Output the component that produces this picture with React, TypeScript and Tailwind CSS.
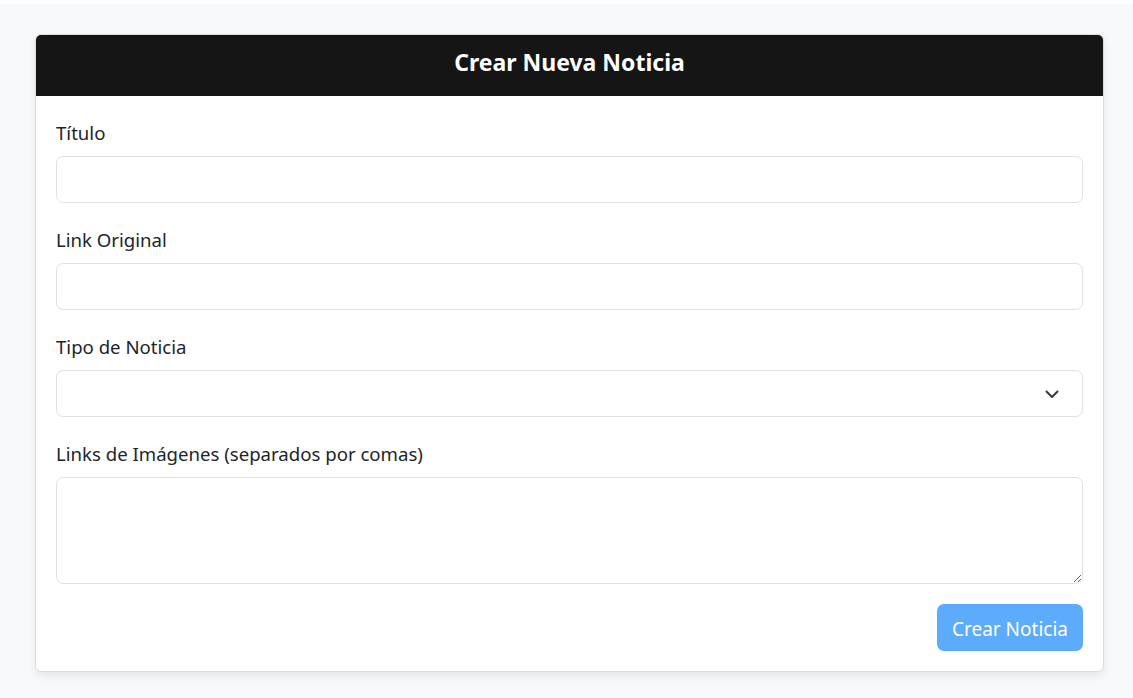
import React from "react";

export default function App() {
  const label = "block text-[18.6px] leading-[30px] pt-[2px] mb-[8px] text-[#212529]";
  const field =
    "block w-full h-[47px] rounded-[7px] border border-[#dee2e6] bg-white px-[12px] text-[18px] text-[#212529] outline-none";
  return (
    <div
      className="min-h-[698px] bg-white pt-[4px]"
      style={{ fontFamily: '"Noto Sans", "Open Sans", sans-serif' }}
    >
      <div className="min-h-[694px] bg-[#f8f9fa] pt-[30px] pl-[35px] pr-[29px] pb-[27px]">
        <div className="w-[1069px] overflow-hidden rounded-[6px] border border-[#dcdcdc] bg-white shadow-[0_4px_8px_rgba(0,0,0,0.08)]">
          <div className="flex h-[61px] items-center justify-center bg-[#151515] pb-[7px]">
            <h1 className="text-[23px] font-bold leading-none text-white">Crear Nueva Noticia</h1>
          </div>
          <form className="flex flex-col gap-[20px] p-[20px]" onSubmit={(e) => e.preventDefault()}>
            <div>
              <label className={label}>Título</label>
              <input type="text" className={field} />
            </div>
            <div>
              <label className={label}>Link Original</label>
              <input type="text" className={field} />
            </div>
            <div>
              <label className={label}>Tipo de Noticia</label>
              <div className="relative">
                <select className={field + " appearance-none"}>
                  <option value=""></option>
                </select>
                <svg
                  className="pointer-events-none absolute right-[24px] top-1/2 -translate-y-1/2"
                  width="14"
                  height="10"
                  viewBox="0 0 14 10"
                  fill="none"
                >
                  <path d="M1.5 2.5 L7 8 L12.5 2.5" stroke="#343a40" strokeWidth="2" strokeLinecap="round" strokeLinejoin="round" />
                </svg>
              </div>
            </div>
            <div>
              <label className={label}>Links de Imágenes (separados por comas)</label>
              <textarea className="block w-full h-[107px] rounded-[7px] border border-[#dee2e6] bg-white px-[12px] py-[8px] text-[18px] text-[#212529] outline-none" />
            </div>
            <div className="flex justify-end">
              <button
                type="submit"
                className="h-[47px] w-[146px] rounded-[7px] bg-[#5cabfc] pt-[3px] text-[19px] text-white"
              >
                Crear Noticia
              </button>
            </div>
          </form>
        </div>
      </div>
    </div>
  );
}
